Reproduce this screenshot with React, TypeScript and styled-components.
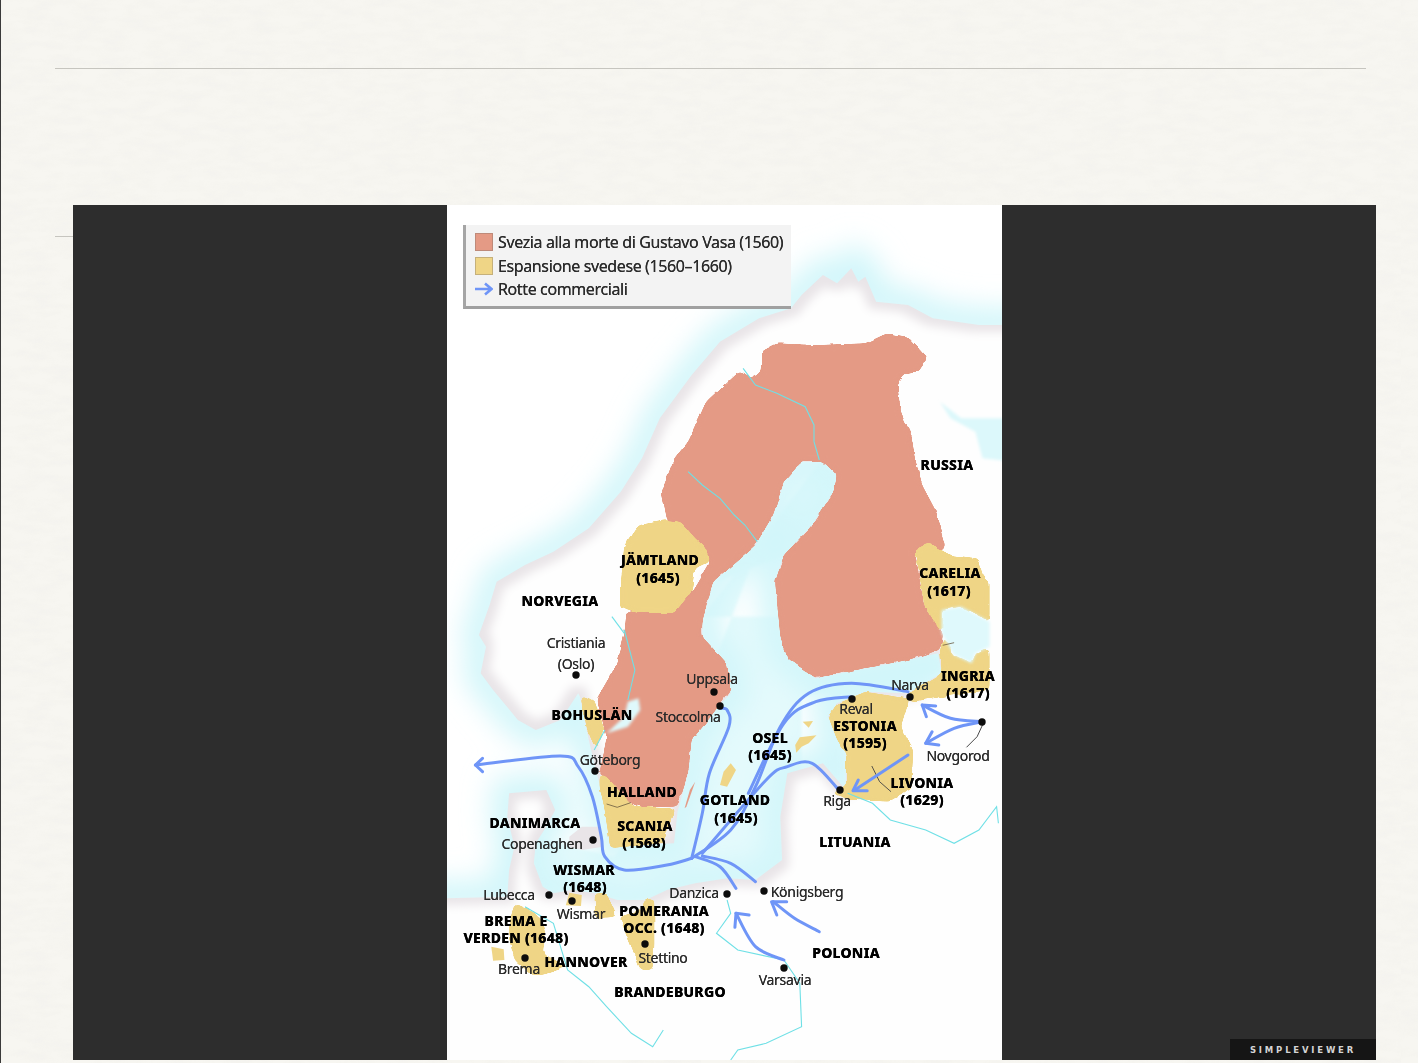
import React from "react";
import styled, { createGlobalStyle } from "styled-components";

type P = [number, number];
const z1 = (a: P[]): P[] => a.map(([x, y]) => [x / 2.82, y / 3]);
const z2 = (a: P[]): P[] => a.map(([x, y]) => [x / 2.82, y / 3 + 425]);
const poly = (a: P[]) => "M" + a.map(([x, y]) => `${x.toFixed(1)} ${y.toFixed(1)}`).join("L") + "Z";
const line = (a: P[]) => "M" + a.map(([x, y]) => `${x.toFixed(1)} ${y.toFixed(1)}`).join("L");
const smooth = (a: P[]) => {
  let d = `M${a[0][0].toFixed(1)} ${a[0][1].toFixed(1)}`;
  for (let i = 0; i < a.length - 1; i++) {
    const p0 = a[i - 1] || a[i];
    const p1 = a[i];
    const p2 = a[i + 1];
    const p3 = a[i + 2] || p2;
    const c1: P = [p1[0] + (p2[0] - p0[0]) / 6, p1[1] + (p2[1] - p0[1]) / 6];
    const c2: P = [p2[0] - (p3[0] - p1[0]) / 6, p2[1] - (p3[1] - p1[1]) / 6];
    d += `C${c1[0].toFixed(1)} ${c1[1].toFixed(1)} ${c2[0].toFixed(1)} ${c2[1].toFixed(1)} ${p2[0].toFixed(1)} ${p2[1].toFixed(1)}`;
  }
  return d;
};

const land = poly([
  ...z1([[1800,360],[1500,360],[1370,340],[1300,300],[1210,290],[1180,215],[1160,230],[1140,190],[1100,235],[1060,210],[1000,270],[970,310],[880,340],[770,410],[690,510],[600,640],[550,760],[490,860],[400,970],[300,1040],[220,1080],[140,1130],[120,1200],[90,1290]]),
  ...z2([[110,50],[95,130],[130,180],[200,270],[250,300],[320,270],[370,190],[375,200],[400,330],[420,420],[440,500],[460,650],[640,640],[650,545],[680,430],[690,330],[720,280],[800,190],[790,110],[720,20]]),
  ...z1([[720,1250],[750,1130],[870,1020],[920,930],[950,830],[1000,770],[1060,770],[1100,810],[1090,860],[1030,960],[950,1050],[925,1130],[940,1290]]),
  ...z2([[960,80],[1040,145],[1180,115],[1300,90],[1385,70],[1395,130],[1330,170],[1300,190],[1180,185],[1100,220],[1075,260],[1110,340],[1125,370],[1125,480],[1060,400],[960,430],[940,560],[945,690],[870,750],[790,745],[700,760],[620,780],[560,810],[480,810],[420,790],[350,780],[300,790],[270,770],[245,700],[250,640],[280,590],[305,540],[280,480],[175,490],[170,560],[190,650],[175,720],[170,800],[-200,810],[-200,1600],[1800,1600]]),
]);

const baltic = poly([
  ...z1([[1060,760],[1110,810],[1050,960],[950,1050],[760,1130],[850,1020],[950,820]]),
  ...z2([[700,250],[640,500],[470,680],[240,620],[250,800],[500,820],[960,720],[1000,400],[1000,200],[1400,120],[1400,60],[1000,120],[940,-40],[720,-40]]),
]);
const zealand = poly(z2([[345,620],[380,590],[430,590],[440,650],[380,660],[345,650]]));
const whiteSea = poly(z1([[1390,590],[1450,640],[1600,640],[1600,770],[1510,760],[1490,680],[1420,640]]));
const ladoga = poly([
  ...z1([[1395,1215],[1450,1205],[1530,1250]]),
  ...z2([[1530,50],[1490,70],[1480,100],[1430,75],[1395,10]]),
]);
const vanern = poly(z2([[450,310],[500,260],[510,215],[540,205],[545,240],[510,290]]));

const pink = poly([
  ...z1([[825,495],[860,520],[885,500],[885,440],[930,415],[1040,420],[1180,415],[1240,385],[1300,395],[1355,460],[1330,500],[1290,510],[1270,540],[1280,620],[1310,690],[1320,760],[1340,840],[1380,920],[1410,1030],[1320,1040],[1345,1200],[1400,1290]]),
  ...z2([[1390,60],[1300,90],[1180,115],[1040,145],[960,85],[940,20]]),
  ...z1([[925,1130],[950,1050],[1030,960],[1090,860],[1100,810],[1060,770],[1000,770],[950,830],[920,930],[870,1020],[750,1130],[720,1250]]),
  ...z2([[720,20],[790,100],[800,180],[730,280],[690,330],[680,430],[650,530],[540,530],[510,515],[430,430],[450,320],[420,210],[480,100],[500,10]]),
  ...z1([[505,1225],[690,1160],[740,1070],[620,945],[605,860],[640,760],[680,710],[730,590],[790,530]]),
]);

const yellows = [
  z1([[620,945],[660,950],[700,1000],[730,1030],[740,1070],[700,1090],[690,1160],[640,1225],[540,1225],[490,1210],[490,1130],[500,1020],[540,960]]),
  [...z1([[1320,1030],[1360,1015],[1420,1050],[1500,1060],[1510,1110],[1530,1130],[1530,1250],[1450,1205],[1395,1215],[1400,1290]]), ...z2([[1430,75],[1480,100],[1490,70],[1530,50],[1530,180],[1400,200],[1310,215],[1300,190],[1395,130],[1390,60],[1400,20]]), ...z1([[1345,1200]])],
  z2([[1300,205],[1180,185],[1100,220],[1075,260],[1100,330],[1125,370],[1125,470],[1080,490],[1140,510],[1250,515],[1310,470],[1315,360],[1280,290],[1300,220]]),
  z2([[430,430],[450,440],[510,510],[530,530],[640,535],[640,545],[610,640],[460,655],[445,540],[430,470]]),
  z2([[375,195],[415,215],[445,300],[420,360],[395,300]]),
  z2([[415,790],[450,790],[480,860],[420,865]]),
  z2([[555,810],[585,805],[585,950],[580,1020],[545,1020],[520,950],[485,860],[550,840]]),
  z2([[190,820],[250,850],[280,900],[270,970],[340,1010],[270,1035],[240,1035],[190,990],[170,900]]),
];
const islets = [
  z2([[800,400],[815,420],[790,470],[770,465],[780,425]]),
  z2([[995,322],[1042,316],[1020,340],[1000,350],[985,368],[982,345]]),
  z2([[1003,275],[1032,273],[1020,293]]),
  z2([[345,788],[380,795],[378,828],[335,826]]),
  z2([[125,950],[160,958],[162,990],[130,992]]),
];
const oland = poly(z2([[700,455],[675,530],[670,535],[685,480]]));

const rivers = [
  z1([[835,490],[870,540],[930,565],[1010,605],[1035,660],[1035,710],[1050,765]]),
  z1([[680,800],[720,840],[770,880],[810,930],[840,960],[875,1010]]),
  z2([[500,0],[530,120],[510,210]]),
  z2([[465,-40],[500,10]]),
  z2([[445,300],[415,360]]),
  z2([[1130,490],[1200,520],[1250,570],[1350,600],[1430,640],[1500,600],[1550,530],[1555,580]]),
  z2([[790,810],[800,850],[760,910],[820,960],[950,990],[995,1060],[1000,1190],[900,1240],[820,1260],[800,1290]]),
  z2([[220,830],[300,880],[340,1020],[400,1070],[450,1130],[520,1210],[580,1250],[610,1200]]),
];

const routes = [
  z2([[80,405],[320,378],[370,410],[410,500],[435,620],[445,680],[500,720],[620,705],[690,685]]),
  z2([[690,685],[720,550],[740,430],[795,290],[790,240],[770,235]]),
  z2([[690,685],[800,600],[870,470],[940,290],[1020,190],[1140,160],[1300,185]]),
  z2([[850,490],[950,280],[1040,215],[1140,200]]),
  z2([[720,670],[900,450],[960,410],[1030,400],[1105,480]]),
  z2([[700,680],[770,710],[815,775]]),
  z2([[720,678],[800,700],[870,755]]),
  z2([[1510,275],[1420,265],[1340,225]]),
  z2([[1510,275],[1430,295],[1350,340]]),
  z2([[1300,375],[1150,480]]),
  z2([[1050,905],[980,865],[920,815]]),
  z2([[950,990],[870,950],[815,850]]),
];
const heads = [
  z2([[100,385],[80,405],[100,425]]),
  z2([[1378,228],[1340,225],[1352,260]]),
  z2([[1387,345],[1350,340],[1368,305]]),
  z2([[1185,482],[1145,482],[1160,450]]),
  z2([[958,815],[915,815],[930,855]]),
  z2([[852,855],[815,850],[812,892]]),
];
const dots: P[] = [[576,675],[714,692],[720,706],[595,771],[593,840],[549,895],[572,901],[727,894],[764,891],[645,944],[525,958],[784,968],[840,790],[852,699],[910,697],[982,722]];

const labels: [string, number, number, boolean][] = [
  ["RUSSIA",947,465,true],["JÄMTLAND",660,560,true],["(1645)",658,578,true],["NORVEGIA",560,601,true],
  ["CARELIA",950,573,true],["(1617)",949,591,true],["INGRIA",968,676,true],["(1617)",968,693,true],
  ["BOHUSLÄN",592,715,true],["OSEL",770,738,true],["(1645)",770,755,true],["ESTONIA",865,726,true],
  ["(1595)",865,743,true],["LIVONIA",922,783,true],["(1629)",922,800,true],["HALLAND",642,792,true],
  ["GOTLAND",735,800,true],["(1645)",736,818,true],["DANIMARCA",535,823,true],["SCANIA",645,826,true],
  ["(1568)",644,843,true],["LITUANIA",855,842,true],["WISMAR",584,870,true],["(1648)",585,887,true],
  ["POMERANIA",664,911,true],["OCC. (1648)",664,928,true],["BREMA E",516,921,true],["VERDEN (1648)",516,938,true],
  ["HANNOVER",586,962,true],["POLONIA",846,953,true],["BRANDEBURGO",670,992,true],
  ["Cristiania",576,643,false],["(Oslo)",576,664,false],["Uppsala",712,679,false],["Stoccolma",688,717,false],
  ["Göteborg",610,760,false],["Copenaghen",542,844,false],["Lubecca",509,895,false],["Wismar",581,914,false],
  ["Danzica",694,893,false],["Königsberg",807,892,false],["Stettino",663,958,false],["Brema",519,969,false],
  ["Varsavia",785,980,false],["Riga",837,801,false],["Reval",856,709,false],["Narva",910,685,false],["Novgorod",958,756,false],
];

const paper = `data:image/svg+xml,%3Csvg xmlns='http://www.w3.org/2000/svg' width='700' height='700'%3E%3Cfilter id='n'%3E%3CfeTurbulence type='fractalNoise' baseFrequency='.04 .12' numOctaves='4'/%3E%3CfeColorMatrix values='0 0 0 0 .6 0 0 0 0 .59 0 0 0 0 .55 0 0 0 .12 -.04'/%3E%3C/filter%3E%3Crect width='700' height='700' filter='url(%23n)'/%3E%3C/svg%3E`;

const Global = createGlobalStyle`
  html, body { margin: 0; padding: 0; }
  body { background: #f6f5f0; overflow: hidden; }
`;

const Slide = styled.div`
  position: relative;
  box-sizing: border-box;
  width: 1418px;
  height: 1063px;
  padding-top: 68px;
  border-left: 1px solid #3a3a3a;
  background-color: #f7f6f1;
  background-image: url("${paper}");
  overflow: hidden;
`;
const Rule = styled.div<{ $gap?: number }>`
  width: 1311px;
  height: 1px;
  margin-left: 54px;
  margin-top: ${(p) => p.$gap ?? 0}px;
  background: #c6c5bf;
`;
const Viewer = styled.div`
  position: absolute;
  left: 72px;
  top: 205px;
  width: 1303px;
  height: 855px;
  display: flex;
  justify-content: center;
  background: #2d2d2d;
`;
const Canvas = styled.div`
  position: relative;
  width: 555px;
  height: 855px;
  background: #fff;
  overflow: hidden;
`;
const Blurred = styled.div`
  position: absolute;
  inset: 0;
  filter: blur(0.55px);
`;
const MapArt = styled.svg`
  display: block;
  width: 556px;
  height: 855px;
`;
const Label = styled.span<{ $x: number; $y: number; $bold: boolean }>`
  position: absolute;
  left: ${(p) => p.$x}px;
  top: ${(p) => p.$y}px;
  transform: translate(-50%, -50%);
  white-space: pre;
  font-family: "Noto Sans", "Liberation Sans", sans-serif;
  font-size: 14px;
  font-weight: ${(p) => (p.$bold ? 800 : 400)};
  letter-spacing: ${(p) => (p.$bold ? "0.25px" : "-0.3px")};
  color: ${(p) => (p.$bold ? "#000" : "#2a2a2a")};
  text-shadow: ${(p) => (p.$bold ? "0 0 0.6px #000" : "0 0 0.4px #333")};
  line-height: 11px;
  height: 11px;
`;
const Legend = styled.div`
  position: absolute;
  left: 16px;
  top: 20px;
  box-sizing: border-box;
  width: 328px;
  height: 84px;
  padding: 7px 0 0 9px;
  display: flex;
  flex-direction: column;
  gap: 3.5px;
  background: #f3f3f3;
  border-left: 3px solid #a5a5a5;
  border-bottom: 3px solid #a0a0a0;
`;
const LegendRow = styled.div`
  display: flex;
  align-items: center;
  gap: 5px;
  height: 20px;
  font-family: "Noto Sans", "Liberation Sans", sans-serif;
  font-size: 16px;
  letter-spacing: -0.38px;
  color: #2a2a2a;
  text-shadow: 0 0 0.4px #333;
`;
const Swatch = styled.span<{ $color: string }>`
  width: 18px;
  height: 18px;
  background: ${(p) => p.$color};
  box-shadow: inset 0 0 0 1px rgba(120, 110, 100, 0.35);
`;
const Badge = styled.div`
  position: absolute;
  right: 0;
  bottom: 0;
  width: 146px;
  height: 21px;
  display: flex;
  align-items: center;
  justify-content: center;
  background: #151515;
  color: #d4d4d4;
  font-family: "DejaVu Sans", "Liberation Sans", sans-serif;
  font-size: 8.5px;
  font-weight: 700;
  letter-spacing: 2.8px;
`;

export default function App() {
  return (
    <>
      <Global />
      <Slide>
        <Rule />
        <Rule $gap={167} />
        <Viewer>
          <Canvas>
            <Blurred>
              <MapArt viewBox="0 0 556 855">
                <defs>
                  <filter id="glow" filterUnits="userSpaceOnUse" x="-100" y="-100" width="800" height="1100">
                    <feGaussianBlur stdDeviation="14" />
                  </filter>
                  <filter id="soft" filterUnits="userSpaceOnUse" x="-100" y="-100" width="800" height="1100">
                    <feGaussianBlur stdDeviation="1.5" />
                  </filter>
                  <filter id="inner" filterUnits="userSpaceOnUse" x="-100" y="-100" width="800" height="1100">
                    <feMorphology operator="erode" radius="7" />
                    <feGaussianBlur stdDeviation="5" />
                  </filter>
                  <filter id="organic" filterUnits="userSpaceOnUse" x="-20" y="-20" width="600" height="900" colorInterpolationFilters="sRGB">
                    <feGaussianBlur in="SourceGraphic" stdDeviation="2.4" result="b" />
                    <feComponentTransfer in="b" result="t">
                      <feFuncA type="linear" slope="14" intercept="-6.5" />
                    </feComponentTransfer>
                    <feTurbulence type="fractalNoise" baseFrequency="0.09" numOctaves="2" seed="4" result="n" />
                    <feDisplacementMap in="t" in2="n" scale="4" xChannelSelector="R" yChannelSelector="G" />
                  </filter>
                </defs>
                <rect width="556" height="855" fill="#fff" />
                <path d={baltic} fill="#e4fafc" filter="url(#soft)" />
                <path d={land} fill="none" stroke="#d2f6fa" strokeWidth="34" filter="url(#glow)" />
                <path d={land} fill="#e9e5e8" />
                <path d={land} fill="#fefefe" filter="url(#inner)" />
                <path d={zealand} fill="#e9e5e8" />
                <path d={whiteSea} fill="#dcf8fb" filter="url(#soft)" />
                <g filter="url(#organic)">
                  <path d={pink} fill="#e49a85" />
                </g>
                <g filter="url(#organic)">
                  {yellows.map((y, i) => (
                    <path key={i} d={poly(y)} fill="#efd586" />
                  ))}
                </g>
                {islets.map((y, i) => (
                  <path key={i} d={poly(y)} fill="#efd586" />
                ))}
                <path d={ladoga} fill="#dff9fc" filter="url(#soft)" />
                <path d={vanern} fill="#dff9fc" filter="url(#soft)" />
                <path d={oland} fill="#e49a85" />
                {rivers.map((r, i) => (
                  <path key={i} d={line(r)} fill="none" stroke="#6fe0e6" strokeWidth="1.1" />
                ))}
                <path d={line(z2([[1510,285],[1495,320],[1465,352]]))} fill="none" stroke="#333" strokeWidth="0.9" />
                <path d={line(z2([[1198,408],[1220,455],[1252,485]]))} fill="none" stroke="#444" strokeWidth="0.9" />
                <path d={line(z2([[450,522],[480,532],[518,518]]))} fill="none" stroke="#6a5a40" strokeWidth="0.8" />
                <path d={line(z2([[1398,46],[1430,38]]))} fill="none" stroke="#6a5a40" strokeWidth="0.8" />
                {routes.map((r, i) => (
                  <path key={i} d={smooth(r)} fill="none" stroke="#6f95f7" strokeWidth="3" strokeLinecap="round" />
                ))}
                {heads.map((h, i) => (
                  <path key={i} d={line(h)} fill="none" stroke="#6f95f7" strokeWidth="3" strokeLinejoin="round" strokeLinecap="round" />
                ))}
                {dots.map(([x, y], i) => (
                  <circle key={i} cx={x - 447} cy={y - 205} r="3.7" fill="#0c0c0c" />
                ))}
              </MapArt>
              {labels.map(([t, x, y, b], i) => (
                <Label key={i} $x={x - 447} $y={y - 206} $bold={b}>
                  {t}
                </Label>
              ))}
              <Legend>
                <LegendRow>
                  <Swatch $color="#e49a85" />
                  Svezia alla morte di Gustavo Vasa (1560)
                </LegendRow>
                <LegendRow>
                  <Swatch $color="#efd586" />
                  Espansione svedese (1560–1660)
                </LegendRow>
                <LegendRow>
                  <svg width="18" height="18" viewBox="0 0 18 18">
                    <path d="M0 9H16M10 3.5L16.5 9L10 14.5" fill="none" stroke="#6f95f7" strokeWidth="2.6" />
                  </svg>
                  Rotte commerciali
                </LegendRow>
              </Legend>
            </Blurred>
          </Canvas>
          <Badge>SIMPLEVIEWER</Badge>
        </Viewer>
      </Slide>
    </>
  );
}
